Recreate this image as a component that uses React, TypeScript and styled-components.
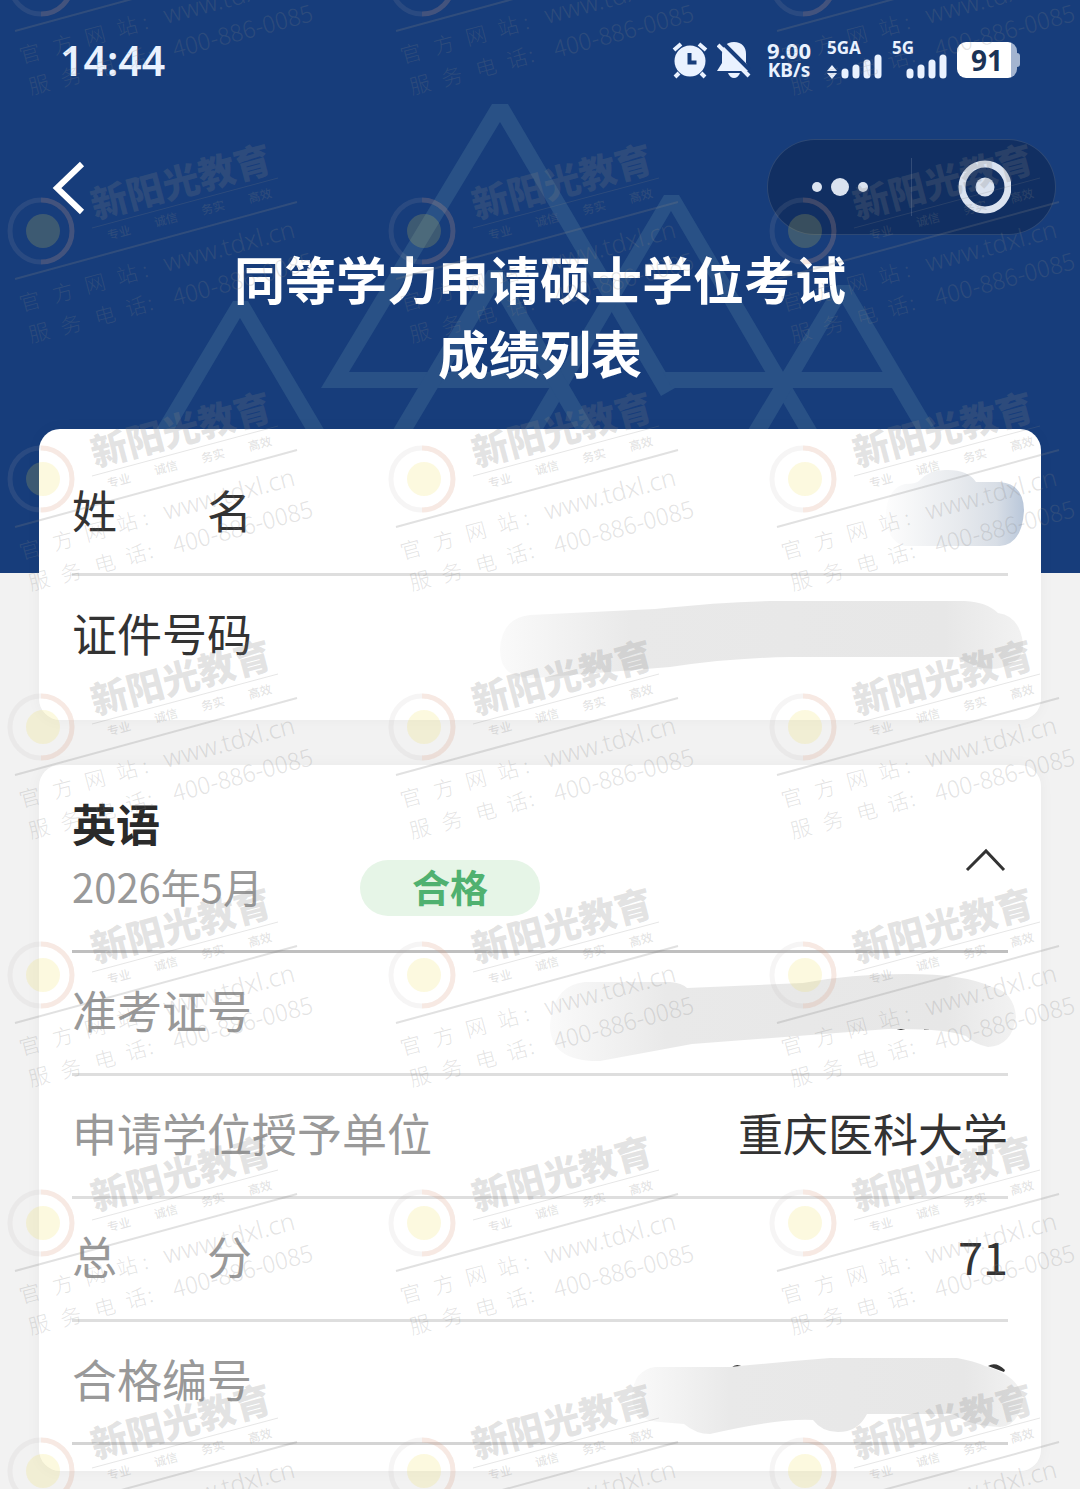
import React, { useState } from "react";
import styled, { createGlobalStyle } from "styled-components";

const cjk = `"Noto Sans CJK SC", sans-serif`;
const latin = `"Noto Sans", "Noto Sans CJK SC", sans-serif`;

const GlobalStyle = createGlobalStyle`
  * { box-sizing: border-box; }
  body { margin: 0; background: #f2f2f2; font-family: ${cjk}; }
  h1, h2, dl, dd, p { margin: 0; }
  button { padding: 0; border: 0; background: none; color: inherit; font: inherit; cursor: pointer; }
  svg { display: block; }
`;

const Page = styled.div`
  position: relative;
  min-height: 100vh;
  overflow: hidden;
  padding-bottom: 18px;
`;

const Hero = styled.header`
  position: relative;
  padding-bottom: 184px;
  background: #173d7b;
  color: #fff;
`;

const HeroPattern = styled.svg`
  position: absolute;
  inset: 0;
  width: 100%;
  height: 100%;
`;

const StatusBar = styled.div`
  position: relative;
  display: flex;
  justify-content: space-between;
  align-items: center;
  height: 120px;
  padding: 0 60px;
  font-family: ${latin};
  color: #eaf2ff;
`;

const Clock = styled.time`
  font-size: 41px;
  font-weight: 600;
  line-height: 120px;
`;

const StatusIcons = styled.div`
  display: flex;
  align-items: center;
  gap: 8px;
`;

const Speed = styled.div`
  display: flex;
  flex-direction: column;
  align-items: center;
  width: 48px;
  margin: 0 6px;
  font-weight: 700;
  line-height: 20px;
`;

const SpeedValue = styled.span`
  font-size: 22px;
`;

const SpeedUnit = styled.span`
  font-size: 19px;
`;

const Signal = styled.div`
  display: flex;
  flex-direction: column;
  align-items: flex-start;
  font-size: 17px;
  font-weight: 700;
  line-height: 12px;
`;

const Battery = styled.div`
  display: flex;
  align-items: center;
`;

const BatteryLevel = styled.span`
  width: 60px;
  height: 36px;
  border-radius: 9px;
  background: linear-gradient(90deg, #fff 54px, #a3b4d0 54px);
  color: #1b3356;
  font-size: 28px;
  font-weight: 700;
  line-height: 36px;
  text-align: center;
`;

const BatteryTip = styled.span`
  width: 3px;
  height: 14px;
  border-radius: 0 3px 3px 0;
  background: #a3b4d0;
`;

const NavBar = styled.nav`
  position: relative;
  display: flex;
  justify-content: space-between;
  align-items: center;
  padding: 19px 24px 6px 44px;
`;

const Capsule = styled.div`
  display: flex;
  align-items: center;
  width: 289px;
  height: 96px;
  border: 1px solid rgba(255, 255, 255, 0.12);
  border-radius: 48px;
  background: rgba(6, 20, 50, 0.34);
`;

const CapsuleButton = styled.button`
  display: flex;
  flex: 1;
  justify-content: center;
  align-items: center;
  height: 58px;
  & + & { border-left: 1px solid rgba(255, 255, 255, 0.14); }
`;

const Title = styled.h1`
  position: relative;
  font-size: 51px;
  font-weight: 700;
  line-height: 74px;
  text-align: center;
`;

const Cards = styled.main`
  position: relative;
  display: grid;
  gap: 45px;
  margin: -144px 39px 0;
`;

const Card = styled.section<{ $bottom: number }>`
  padding: 24px 33px ${(p) => p.$bottom}px;
  border-radius: 21px;
  background: #fff;
  box-shadow: 0 0 15px rgba(0, 0, 0, 0.04);
`;

const Rows = styled.dl`
  color: #333;
`;

const Row = styled.div<{ $line?: string }>`
  display: flex;
  justify-content: space-between;
  padding: 27px 0 33px;
  border-bottom: ${(p) => (p.$line ? `3px solid ${p.$line}` : "0")};
  font-size: 45px;
  line-height: 60px;
`;

const Label = styled.dt<{ $muted?: boolean }>`
  color: ${(p) => (p.$muted ? "#999" : "#333")};
  white-space: pre;
`;

const Value = styled.dd`
  text-align: right;
`;

const Smudge = styled.svg`
  height: 120px;
  margin: -27px -18px -33px 0;
`;

const SubjectHeader = styled.div`
  display: flex;
  justify-content: space-between;
  align-items: center;
  padding: 6px 0 31px;
  border-bottom: 3px solid #bfbfbf;
`;

const Subject = styled.h2`
  padding-bottom: 6px;
  color: #2a2a2a;
  font-size: 44px;
  font-weight: 700;
  line-height: 56px;
`;

const SubjectMeta = styled.div`
  display: flex;
  align-items: center;
  height: 62px;
`;

const ExamDate = styled.time`
  min-width: 288px;
  padding-bottom: 4px;
  color: #999;
  font-size: 40px;
  line-height: 58px;
`;

const Badge = styled.span`
  width: 180px;
  padding-bottom: 4px;
  border-radius: 28px;
  background: #e6f5e7;
  color: #50b170;
  font-size: 38px;
  font-weight: 700;
  line-height: 52px;
  text-align: center;
`;

const Watermark = styled.div`
  position: absolute;
  inset: 0;
  overflow: hidden;
  pointer-events: none;
`;

const WatermarkGrid = styled.div`
  display: grid;
  grid-template-columns: repeat(auto-fill, 381px);
  width: calc(100% + 381px);
  margin-top: -117px;
`;

function Mark() {
  const tags: [string, number, number][] = [
    ["专业", 120, 106],
    ["诚信", 167, 93],
    ["务实", 214, 81],
    ["高效", 261, 69],
  ];
  const spaced: [string, number, number][] = [
    ["官", 32, 178],
    ["方", 65, 169],
    ["网", 97, 160],
    ["站", 129, 151],
    [":", 147, 146],
    ["服", 41, 209],
    ["务", 73, 201],
    ["电", 107, 192],
    ["话", 138, 183],
    [":", 152, 179],
  ];
  return (
    <svg width="381" height="248" fontFamily={cjk} fill="#808080" fillOpacity="0.22" aria-hidden="true">
      <circle cx="41" cy="100" r="31" fill="none" stroke="#b9b0b0" strokeOpacity="0.12" strokeWidth="5" />
      <path d="M41 69a31 31 0 0 1 0 62" fill="none" stroke="#ff9060" strokeOpacity="0.12" strokeWidth="5" />
      <circle cx="43" cy="100" r="17" fill="#f0dc50" fillOpacity="0.18" />
      <text fontSize="37" fontWeight="900" transform="translate(95 88) rotate(-15)">新阳光教育</text>
      <path d="M92 97L278 47" stroke="#808080" strokeOpacity="0.2" />
      <path d="M15 148L297 71" stroke="#808080" strokeOpacity="0.24" strokeWidth="2" />
      {tags.map(([t, x, y]) => (
        <text key={t} fontSize="12" fontWeight="500" textAnchor="middle" transform={`translate(${x} ${y}) rotate(-15)`}>{t}</text>
      ))}
      {spaced.map(([t, x, y]) => (
        <text key={t + x} fontSize="21" fontWeight="300" textAnchor="middle" transform={`translate(${x} ${y}) rotate(-15)`}>{t}</text>
      ))}
      <text fontSize="25" fontWeight="300" fontFamily={latin} transform="translate(166 141) rotate(-15)">www.tdxl.cn</text>
      <text fontSize="24" fontWeight="300" transform="translate(175 175) rotate(-15)">400-886-0085</text>
    </svg>
  );
}

function Bars() {
  return (
    <g stroke="#eaf2ff" strokeWidth="7" strokeLinecap="round">
      <path d="M4 21v-3M15 21v-7M26 21v-12M37 21v-17" />
    </g>
  );
}

function SmudgeDefs() {
  return (
    <svg width="0" height="0" style={{ position: "absolute" }} aria-hidden="true">
      <defs>
        <linearGradient id="nameFill">
          <stop offset="0" stopColor="#fdfdfd" />
          <stop offset="0.55" stopColor="#e6e9ed" />
          <stop offset="0.8" stopColor="#d8dee6" />
          <stop offset="1" stopColor="#b9c7da" />
        </linearGradient>
        <linearGradient id="greyFill">
          <stop offset="0" stopColor="#fafafa" />
          <stop offset="0.25" stopColor="#e9e9e9" />
          <stop offset="0.85" stopColor="#e7e7e7" />
          <stop offset="1" stopColor="#f2f2f2" />
        </linearGradient>
      </defs>
    </svg>
  );
}

export default function App() {
  const [open, setOpen] = useState(true);
  return (
    <Page>
      <GlobalStyle />
      <SmudgeDefs />
      <Hero>
        <HeroPattern viewBox="0 0 1080 573" preserveAspectRatio="xMidYMin slice" aria-hidden="true">
          <g fill="#295186">
            <path d="M492 104H508L675 388L661 396L500 122L349 372H566V388H321z" />
            <path d="M664 195H679L828 448L812 452L671 211L532 448L516 444z" />
            <path d="M233 301H248L335 448L319 452L240 318L161 452L145 448z" />
            <path d="M488 270H502L601 440L585 446L495 292L403 446L387 440z" />
            <path d="M835 285H850L945 445L929 451L842 303L758 446L742 440z" />
            <path d="M663 372H895V388H672z" />
          </g>
        </HeroPattern>
        <StatusBar>
          <Clock>14:44</Clock>
          <StatusIcons>
            <svg width="38" height="38" viewBox="0 0 38 38" aria-label="闹钟">
              <g fill="none" stroke="#eaf2ff" strokeWidth="4">
                <path d="M3 9l7-6M35 9l-7-6M8 32l-4 4M30 32l4 4" />
              </g>
              <circle cx="19" cy="20" r="15.500" fill="#eaf2ff" />
              <path d="M18.500 12v9.500h7" fill="none" stroke="#173d7b" strokeWidth="4" />
            </svg>
            <svg width="34" height="38" viewBox="0 0 34 38" aria-label="静音">
              <path d="M17 1C9 1 5 6 5 13v9l-5 8h34l-5-8v-9C29 6 25 1 17 1z" fill="#eaf2ff" />
              <path d="M11 32h12q-2 5-6 5t-6-5z" fill="#eaf2ff" />
              <path d="M4 0L35 31" stroke="#173d7b" strokeWidth="4" />
              <path d="M1 4L32 35" stroke="#eaf2ff" strokeWidth="4" />
            </svg>
            <Speed>
              <SpeedValue>9.00</SpeedValue>
              <SpeedUnit>KB/s</SpeedUnit>
            </Speed>
            <Signal>
              5GA
              <svg width="57" height="25" viewBox="-14 0 57 25" aria-hidden="true">
                <path d="M-14 17l5-6 5 6zM-14 19l5 6 5-6z" fill="#eaf2ff" />
                <Bars />
              </svg>
            </Signal>
            <Signal>
              5G
              <svg width="57" height="25" viewBox="-14 0 57 25" aria-hidden="true">
                <Bars />
              </svg>
            </Signal>
            <Battery>
              <BatteryLevel>91</BatteryLevel>
              <BatteryTip />
            </Battery>
          </StatusIcons>
        </StatusBar>
        <NavBar>
          <button aria-label="返回">
            <svg width="48" height="60" viewBox="0 0 48 60">
              <path d="M38 7L13 31l25 24" fill="none" stroke="#fff" strokeWidth="6" />
            </svg>
          </button>
          <Capsule>
            <CapsuleButton aria-label="更多">
              <svg width="58" height="20" viewBox="0 0 58 20" fill="#dbe3f0">
                <circle cx="6" cy="10" r="5" />
                <circle cx="29" cy="10" r="9" />
                <circle cx="52" cy="10" r="5" />
              </svg>
            </CapsuleButton>
            <CapsuleButton aria-label="关闭">
              <svg width="54" height="54" viewBox="0 0 54 54">
                <circle cx="28" cy="27" r="23" fill="none" stroke="#dbe3f0" strokeWidth="7" />
                <circle cx="28" cy="27" r="9.500" fill="#dbe3f0" />
              </svg>
            </CapsuleButton>
          </Capsule>
        </NavBar>
        <Title>
          同等学力申请硕士学位考试
          <br />
          成绩列表
        </Title>
      </Hero>

      <Cards>
        <Card $bottom={24}>
          <Rows>
            <Row $line="#dedede">
              <Label>姓　　名</Label>
              <Value>
                <Smudge width="150" viewBox="876 453 150 120" role="img" aria-label="已隐藏">
                  <path d="M905 484Q917 484 920 480Q930 469 948 470Q968 470 976 482H1000Q1024 484 1024 511Q1022 544 1000 546H905Q886 542 886 512Q888 488 905 484z" fill="url(#nameFill)" />
                </Smudge>
              </Value>
            </Row>
            <Row>
              <Label>证件号码</Label>
              <Value>
                <Smudge width="530" viewBox="496 576 530 120" role="img" aria-label="已隐藏">
                  <path d="M500 650Q501 618 530 615L655 609Q720 602 770 601H965Q987 602 998 613Q1020 616 1023 644Q1024 662 1000 668Q980 672 958 657H790Q730 658 670 667L535 678Q500 680 500 650z" fill="url(#greyFill)" />
                </Smudge>
              </Value>
            </Row>
          </Rows>
        </Card>

        <Card $bottom={26}>
          <SubjectHeader>
            <div>
              <Subject>英语</Subject>
              <SubjectMeta>
                <ExamDate dateTime="2026-05">2026年5月</ExamDate>
                <Badge>合格</Badge>
              </SubjectMeta>
            </div>
            <button aria-label="展开或收起" aria-expanded={open} onClick={() => setOpen(!open)}>
              <svg width="46" height="46" viewBox="0 0 46 46">
                <path d={open ? "M5 36l19-19 18 19" : "M5 17l19 19 18-19"} fill="none" stroke="#333" strokeWidth="3" />
              </svg>
            </button>
          </SubjectHeader>
          {open && (
            <Rows>
              <Row $line="#dedede">
                <Label $muted>准考证号</Label>
                <Value>
                  <Smudge width="480" viewBox="546 953 480 120" role="img" aria-label="已隐藏">
                    <path d="M893 1027q8 6 16 0zM924 1027h5v3h-5z" fill="#333" />
                    <path d="M550 1025Q553 985 585 982H670Q682 983 687 988L803 983Q850 974 907 974Q965 974 992 987Q1014 992 1016 1017Q1012 1046 988 1047Q974 1044 966 1036Q945 1028 888 1029L692 1044L600 1061Q550 1062 550 1025z" fill="url(#greyFill)" />
                  </Smudge>
                </Value>
              </Row>
              <Row $line="#dedede">
                <Label $muted>申请学位授予单位</Label>
                <Value>重庆医科大学</Value>
              </Row>
              <Row $line="#dedede">
                <Label $muted>总　　分</Label>
                <Value>71</Value>
              </Row>
              <Row $line="#d4d4d4">
                <Label $muted>合格编号</Label>
                <Value>
                  <Smudge width="400" viewBox="626 1322 400 120" role="img" aria-label="已隐藏">
                    <path d="M731 1368q6-6 13 0zM988 1366q8-5 17 4l-1 2z" fill="#333" />
                    <path d="M632 1395Q634 1370 655 1367L730 1367Q780 1362 830 1358H957Q974 1361 985 1366Q1020 1376 1023 1400Q1018 1426 1000 1427Q970 1426 953 1414H867Q858 1432 838 1432Q822 1432 813 1420Q780 1418 710 1434Q696 1434 684 1424L660 1422Q632 1420 632 1395z" fill="url(#greyFill)" />
                  </Smudge>
                </Value>
              </Row>
            </Rows>
          )}
        </Card>
      </Cards>

      <Watermark aria-hidden="true">
        <WatermarkGrid>
          {Array.from({ length: 21 }, (_, i) => (
            <Mark key={i} />
          ))}
        </WatermarkGrid>
      </Watermark>
    </Page>
  );
}
